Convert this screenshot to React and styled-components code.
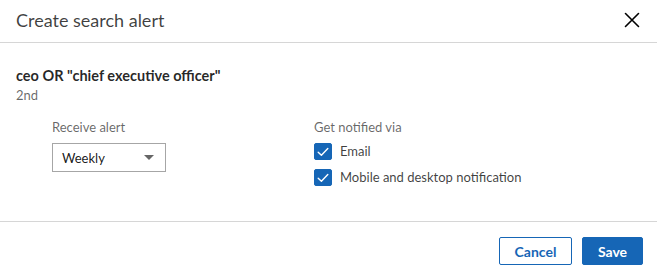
import * as React from "react";
import styled, { createGlobalStyle } from "styled-components";

const GlobalStyle = createGlobalStyle`
    html, body {
        margin: 0;
        padding: 0;
        background: #fff;
    }
    body {
        font-family: Lato, "Liberation Sans", sans-serif;
        color: rgba(0, 0, 0, 0.9);
    }
`;

const BLUE = "#1666b6";

function CheckIcon() {
    return (
        <svg width="12" height="10" viewBox="0 0 12 10" fill="none">
            <path
                d="M1.2 5.2 L4.4 8.3 L10.8 1.4"
                stroke="#fff"
                strokeWidth="1.4"
                strokeLinecap="round"
                strokeLinejoin="round"
            />
        </svg>
    );
}

function CloseIcon() {
    return (
        <svg width="16" height="16" viewBox="0 0 16 16">
            <path
                d="M1.5 1.5 L14.5 14.5 M14.5 1.5 L1.5 14.5"
                stroke="#000"
                strokeWidth="1.6"
                strokeLinecap="round"
            />
        </svg>
    );
}

function CreateAlertModal() {
    const [frequency, setFrequency] = React.useState("Weekly");
    const [channels, setChannels] = React.useState({
        email: true,
        mobile: true,
    });

    const toggle = (key) =>
        setChannels((prev) => ({ ...prev, [key]: !prev[key] }));

    return (
        <Modal>
            <Header>
                <Title>Create search alert</Title>
                <CloseButton aria-label="Dismiss">
                    <CloseIcon />
                </CloseButton>
            </Header>
            <Body>
                <Query>ceo OR "chief executive officer"</Query>
                <Network>2nd</Network>
                <Options>
                    <OptionColumn>
                        <FieldLabel>Receive alert</FieldLabel>
                        <SelectBox>
                            <span>{frequency}</span>
                            <Caret />
                            <HiddenSelect
                                value={frequency}
                                onChange={(e) => setFrequency(e.target.value)}
                            >
                                <option>Daily</option>
                                <option>Weekly</option>
                            </HiddenSelect>
                        </SelectBox>
                    </OptionColumn>
                    <OptionColumn>
                        <FieldLabel>Get notified via</FieldLabel>
                        <CheckList>
                            <CheckRow onClick={() => toggle("email")}>
                                <Box $checked={channels.email}>
                                    {channels.email && <CheckIcon />}
                                </Box>
                                Email
                            </CheckRow>
                            <CheckRow onClick={() => toggle("mobile")}>
                                <Box $checked={channels.mobile}>
                                    {channels.mobile && <CheckIcon />}
                                </Box>
                                Mobile and desktop notification
                            </CheckRow>
                        </CheckList>
                    </OptionColumn>
                </Options>
            </Body>
            <Footer>
                <Button $width={73}>Cancel</Button>
                <Button $primary $width={61}>
                    Save
                </Button>
            </Footer>
        </Modal>
    );
}

const Modal = styled.div`
    width: 657px;
    height: 274px;
    display: flex;
    flex-direction: column;
    background: #fff;
`;
const Header = styled.header`
    height: 43px;
    box-sizing: border-box;
    border-bottom: 1px solid #d6d6d6;
    display: flex;
    align-items: center;
    justify-content: space-between;
    padding: 0 17px 2px 16px;
`;
const Title = styled.h2`
    margin: 0;
    font-size: 18px;
    font-weight: 400;
    color: rgba(0, 0, 0, 0.75);
`;
const CloseButton = styled.button`
    border: 0;
    background: none;
    padding: 0;
    width: 16px;
    height: 16px;
    display: flex;
    align-items: center;
    justify-content: center;
    cursor: pointer;
`;
const Body = styled.section`
    padding: 23px 16px 0 16px;
    height: 179px;
    box-sizing: border-box;
    border-bottom: 1px solid #d6d6d6;
`;
const Query = styled.h3`
    margin: 0;
    font-size: 14.5px;
    line-height: 20px;
    font-weight: 700;
    color: rgba(0, 0, 0, 0.85);
`;
const Network = styled.div`
    font-size: 13px;
    line-height: 18px;
    color: rgba(0, 0, 0, 0.6);
`;
const Options = styled.div`
    display: grid;
    grid-template-columns: 262px 1fr;
    padding: 14px 0 0 36px;
`;
const OptionColumn = styled.div`
    display: flex;
    flex-direction: column;
`;
const FieldLabel = styled.label`
    font-size: 13px;
    line-height: 18px;
    color: rgba(0, 0, 0, 0.6);
    margin-bottom: 7px;
`;
const SelectBox = styled.div`
    position: relative;
    width: 114px;
    height: 29px;
    box-sizing: border-box;
    border: 1px solid #a6a6a6;
    display: flex;
    align-items: center;
    justify-content: space-between;
    padding: 0 11px 0 9px;
    font-size: 13px;
    color: rgba(0, 0, 0, 0.9);
`;
const Caret = styled.span`
    width: 0;
    height: 0;
    border-left: 5px solid transparent;
    border-right: 5px solid transparent;
    border-top: 5px solid rgba(0, 0, 0, 0.6);
`;
const HiddenSelect = styled.select`
    position: absolute;
    inset: 0;
    opacity: 0;
    cursor: pointer;
`;
const CheckList = styled.div`
    display: flex;
    flex-direction: column;
    gap: 9px;
`;
const CheckRow = styled.div`
    display: flex;
    align-items: center;
    gap: 8px;
    font-size: 13px;
    line-height: 17px;
    color: rgba(0, 0, 0, 0.75);
    cursor: pointer;
`;
const Box = styled.span`
    width: 18px;
    height: 17px;
    border-radius: 2px;
    display: flex;
    align-items: center;
    justify-content: center;
    box-sizing: border-box;
    background: ${(p) => (p.$checked ? BLUE : "#fff")};
    border: 1px solid ${(p) => (p.$checked ? BLUE : "#888")};
`;
const Footer = styled.footer`
    display: flex;
    justify-content: flex-end;
    align-items: flex-start;
    gap: 10px;
    padding: 15px 14px 0 0;
`;
const Button = styled.button`
    height: 28px;
    width: ${(p) => p.$width}px;
    padding: 0;
    border-radius: 2px;
    font-family: inherit;
    font-size: 14px;
    font-weight: 700;
    cursor: pointer;
    background: ${(p) => (p.$primary ? BLUE : "#fff")};
    color: ${(p) => (p.$primary ? "#fff" : BLUE)};
    border: 1px solid ${BLUE};
`;

export default function App() {
    return (
        <>
            <GlobalStyle />
            <CreateAlertModal />
        </>
    );
}
